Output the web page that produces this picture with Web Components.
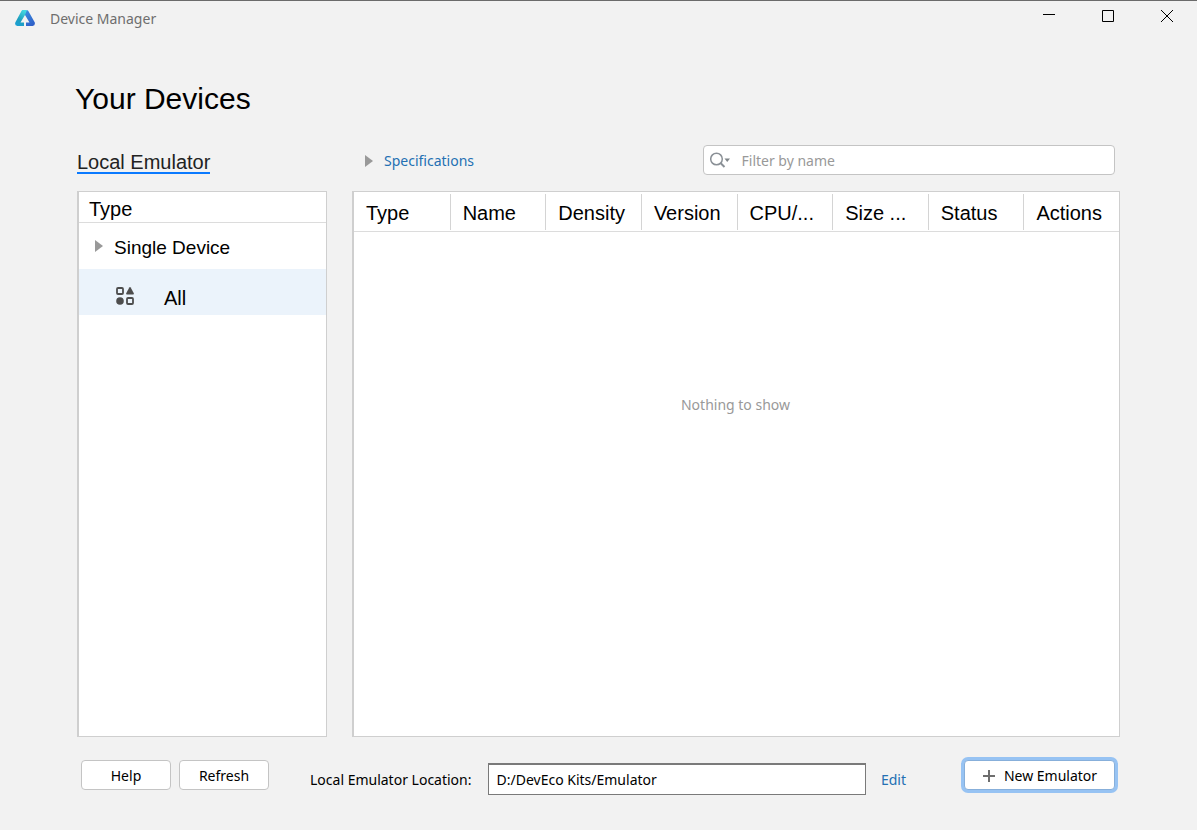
<!DOCTYPE html>
<html lang="en">
<head>
<meta charset="utf-8">
<title>Device Manager</title>
<style>
  :root {
    --bg: #f2f2f2;
    --line: #cfcfcf;
    --link: #2470b3;
    --ui: "Noto Sans", "Open Sans", sans-serif;
    --heading: "Liberation Sans", Arial, sans-serif;
  }
  body { margin: 0; background: var(--bg); color: #000; font: 14px/20px var(--ui); }
</style>
</head>
<body>
<device-manager></device-manager>

<script>
const define = (name, html) => {
  const template = document.createElement('template');
  template.innerHTML = html;
  customElements.define(name, class extends HTMLElement {
    constructor() {
      super();
      this.attachShadow({ mode: 'open' }).append(template.content.cloneNode(true));
    }
  });
};

define('app-logo', `
  <style>:host { display: block; width: 20px; height: 18px; } svg { display: block; }</style>
  <svg width="20" height="18" viewBox="0 0 20 18" aria-hidden="true">
    <defs>
      <linearGradient id="l" x1="0.7" y1="0" x2="0.2" y2="1"><stop offset="0" stop-color="#45d8e0"/><stop offset="0.6" stop-color="#1f9fbe"/><stop offset="1" stop-color="#1b9fd4"/></linearGradient>
      <linearGradient id="r" x1="0.2" y1="0" x2="0.7" y2="1"><stop offset="0" stop-color="#3a8fe0"/><stop offset="1" stop-color="#2f5fc8"/></linearGradient>
    </defs>
    <path d="M12 1l1.200.8 6.600 11.700q.6 3-2.200 3.500H11v-3.500h3.500L10 6 8.500 3.500Z" fill="url(#r)"/>
    <path d="M7.400 1H12L10 6 5.500 13.500H9V17H2.400Q-.6 16.500.3 13.500L6.600 1.800Z" fill="url(#l)"/>
  </svg>`);

define('window-button', `
  <style>
    :host { display: block; }
    button { display: flex; align-items: center; justify-content: center; box-sizing: border-box; width: 59px; height: 30px; padding: 0 1px 0 0; border: 0; background: none; color: #000; }
  </style>
  <button type="button"><slot></slot></button>`);

define('title-bar', `
  <style>
    :host { display: flex; align-items: flex-start; box-sizing: border-box; height: 37px; border-top: 1px solid #6b6b6b; padding-left: 15px; color: #6e6e6e; }
    app-logo { margin-top: 8px; }
    .title { flex: 1; margin: 8px 0 0 15px; }
    svg { display: block; }
  </style>
  <app-logo></app-logo>
  <span class="title"><slot></slot></span>
  <window-button><svg role="img" aria-label="Minimize" width="12" height="12"><path d="M0 4.500h12" stroke="#000"/></svg></window-button>
  <window-button><svg role="img" aria-label="Maximize" width="12" height="12"><path d="M.5.5h11v11H.5z" fill="none" stroke="#000"/></svg></window-button>
  <window-button><svg role="img" aria-label="Close" width="12" height="12"><path d="M0 0l12 12M12 0L0 12" stroke="#000"/></svg></window-button>`);

define('tree-arrow', `
  <style>:host { display: block; } svg { display: block; }</style>
  <svg width="8" height="12" aria-hidden="true"><path d="M0 0l8 6-8 6z" fill="#999"/></svg>`);

define('type-panel', `
  <style>
    :host { display: block; box-sizing: border-box; background: #fff; border: 1px solid var(--line); border-left-width: 2px; font: 20px/24px var(--heading); }
    h2 { margin: 0; padding: 5px 10px 1px; border-bottom: 1px solid #dcdcdc; font: inherit; }
    ul { list-style: none; margin: 0; padding: 0; }
    button { display: flex; align-items: center; box-sizing: border-box; width: 100%; height: 46px; border: 0; background: none; color: #000; font: inherit; text-align: left; }
    .group { padding: 4px 0 0 16px; gap: 11px; font-size: 19px; }
    tree-arrow { margin-bottom: 4px; }
    .selected { padding: 12px 0 0 37px; gap: 30px; background: #ebf3fb; }
    .selected svg { margin-bottom: 4px; }
  </style>
  <h2>Type</h2>
  <ul>
    <li><button type="button" class="group"><tree-arrow></tree-arrow>Single Device</button>
      <ul>
        <li><button type="button" class="selected">
          <svg width="18" height="18" viewBox="0 0 18 18" fill="#4d4d4d" aria-hidden="true">
            <rect x="1" y="1" width="6" height="6" rx="1" fill="none" stroke="#4d4d4d" stroke-width="1.800"/>
            <path d="M13.300.5q.7-.8 1.400 0l3.100 5.800q.3 1.100-.7 1.300h-6.200q-1-.2-.7-1.300z"/>
            <circle cx="4" cy="14" r="3.800"/>
            <rect x="11" y="11" width="6" height="6" rx="1" fill="none" stroke="#4d4d4d" stroke-width="1.800"/>
          </svg>All</button></li>
      </ul>
    </li>
  </ul>`);

define('filter-field', `
  <style>
    :host { display: block; }
    label { display: flex; align-items: center; box-sizing: border-box; height: 30px; padding: 0 6px; gap: 12px; background: #fff; border: 1px solid #c4c4c4; border-radius: 4px; }
    input { flex: 1; min-width: 0; padding: 1px 0 0; border: 0; outline: 0; background: none; font: 14px/20px var(--ui); }
    input::placeholder { color: #999; opacity: 1; }
  </style>
  <label>
    <svg width="20" height="16" fill="none" stroke="#8a9096" stroke-width="1.500" aria-hidden="true"><circle cx="6.500" cy="7" r="5.800"/><path d="M10.500 11l4 4" stroke-width="2"/><path d="M14.500 6.500h5.500l-2.750 3.500z" fill="#7f8589" stroke="none"/></svg>
    <input type="text" placeholder="Filter by name" aria-label="Filter by name">
  </label>`);

define('device-table', `
  <style>
    :host { display: block; box-sizing: border-box; background: #fff; border: 1px solid var(--line); border-left-width: 2px; }
    table { width: 100%; table-layout: fixed; border-collapse: separate; border-spacing: 0; }
    th { padding: 2px 0 1px; border-bottom: 1px solid #dcdcdc; font: 20px/34px var(--heading); text-align: left; }
    th span { display: block; padding: 2px 0 0 12px; border-left: 1px solid #d4d4d4; white-space: nowrap; overflow: hidden; }
    th:first-child span { border-left: 0; }
    td { padding: 163px 2px 0 0; color: #999; text-align: center; }
  </style>
  <table>
    <thead><tr>
      <th><span>Type</span></th><th><span>Name</span></th><th><span>Density</span></th><th><span>Version</span></th>
      <th><span>CPU/...</span></th><th><span>Size ...</span></th><th><span>Status</span></th><th><span>Actions</span></th>
    </tr></thead>
    <tbody><tr><td colspan="8">Nothing to show</td></tr></tbody>
  </table>`);

define('push-button', `
  <style>
    :host { display: block; }
    button { display: flex; align-items: center; justify-content: center; gap: 8px; box-sizing: border-box; width: 100%; height: 30px; padding: 1px 0 0; border: 1px solid #c4c4c4; border-radius: 4px; background: #fff; color: #000; font: 14px/20px var(--ui); }
    :host([primary]) button { border-color: #87afda; box-shadow: 0 0 0 3px #97c3f3; }
  </style>
  <button type="button"><slot></slot></button>`);

define('manager-footer', `
  <style>
    :host { display: flex; align-items: flex-start; padding: 23px 5px 35px 4px; }
    .actions { display: flex; gap: 8px; }
    .actions push-button { width: 90px; }
    .location { flex: 1; display: flex; align-items: center; margin: 3px 58px 0 41px; }
    label, a { padding-top: 1px; }
    input { flex: 1; min-width: 0; box-sizing: border-box; height: 32px; margin: 0 15px 0 16px; padding: 0 8px; border: 1px solid #7a7a7a; border-top-width: 2px; background: #fff; color: #000; font: 14px/20px var(--ui); }
    a { color: var(--link); text-decoration: none; }
    .create { width: 151px; }
    svg { display: block; }
  </style>
  <div class="actions"><push-button>Help</push-button><push-button>Refresh</push-button></div>
  <div class="location">
    <label for="path">Local Emulator Location:</label>
    <input id="path" type="text" value="D:/DevEco Kits/Emulator">
    <a href="#edit">Edit</a>
  </div>
  <push-button class="create" primary><svg width="14" height="14" aria-hidden="true"><path d="M7 1v12M1 7h12" stroke="#6e6e6e" stroke-width="2"/></svg>New Emulator</push-button>`);

define('device-manager', `
  <style>
    :host { display: flex; flex-direction: column; min-height: 100vh; }
    main { flex: 1; display: flex; flex-direction: column; padding: 44px 77px 0; }
    h1 { margin: 0 0 28px -2px; font: 30px/36px var(--heading); }
    .grid { flex: 1; display: grid; grid-template: 30px 1fr / 250px minmax(0, 1fr); gap: 16px 25px; }
    .tab { justify-self: start; align-self: end; margin-bottom: 1px; padding: 0; border: 0; border-bottom: 2px solid #0a7aff; background: none; color: #222; font: 20px/20px var(--heading); }
    .tools { display: flex; align-items: center; padding: 0 5px 0 13px; }
    .specs { display: flex; align-items: center; gap: 11px; padding: 1px 0 0; border: 0; background: none; color: var(--link); font: 14px/20px var(--ui); }
    filter-field { width: 55%; margin-left: auto; }
  </style>
  <title-bar>Device Manager</title-bar>
  <main>
    <h1>Your Devices</h1>
    <div class="grid">
      <button type="button" class="tab">Local Emulator</button>
      <div class="tools">
        <button type="button" class="specs"><tree-arrow></tree-arrow>Specifications</button>
        <filter-field></filter-field>
      </div>
      <type-panel></type-panel>
      <device-table></device-table>
    </div>
    <manager-footer></manager-footer>
  </main>`);
</script>
</body>
</html>
